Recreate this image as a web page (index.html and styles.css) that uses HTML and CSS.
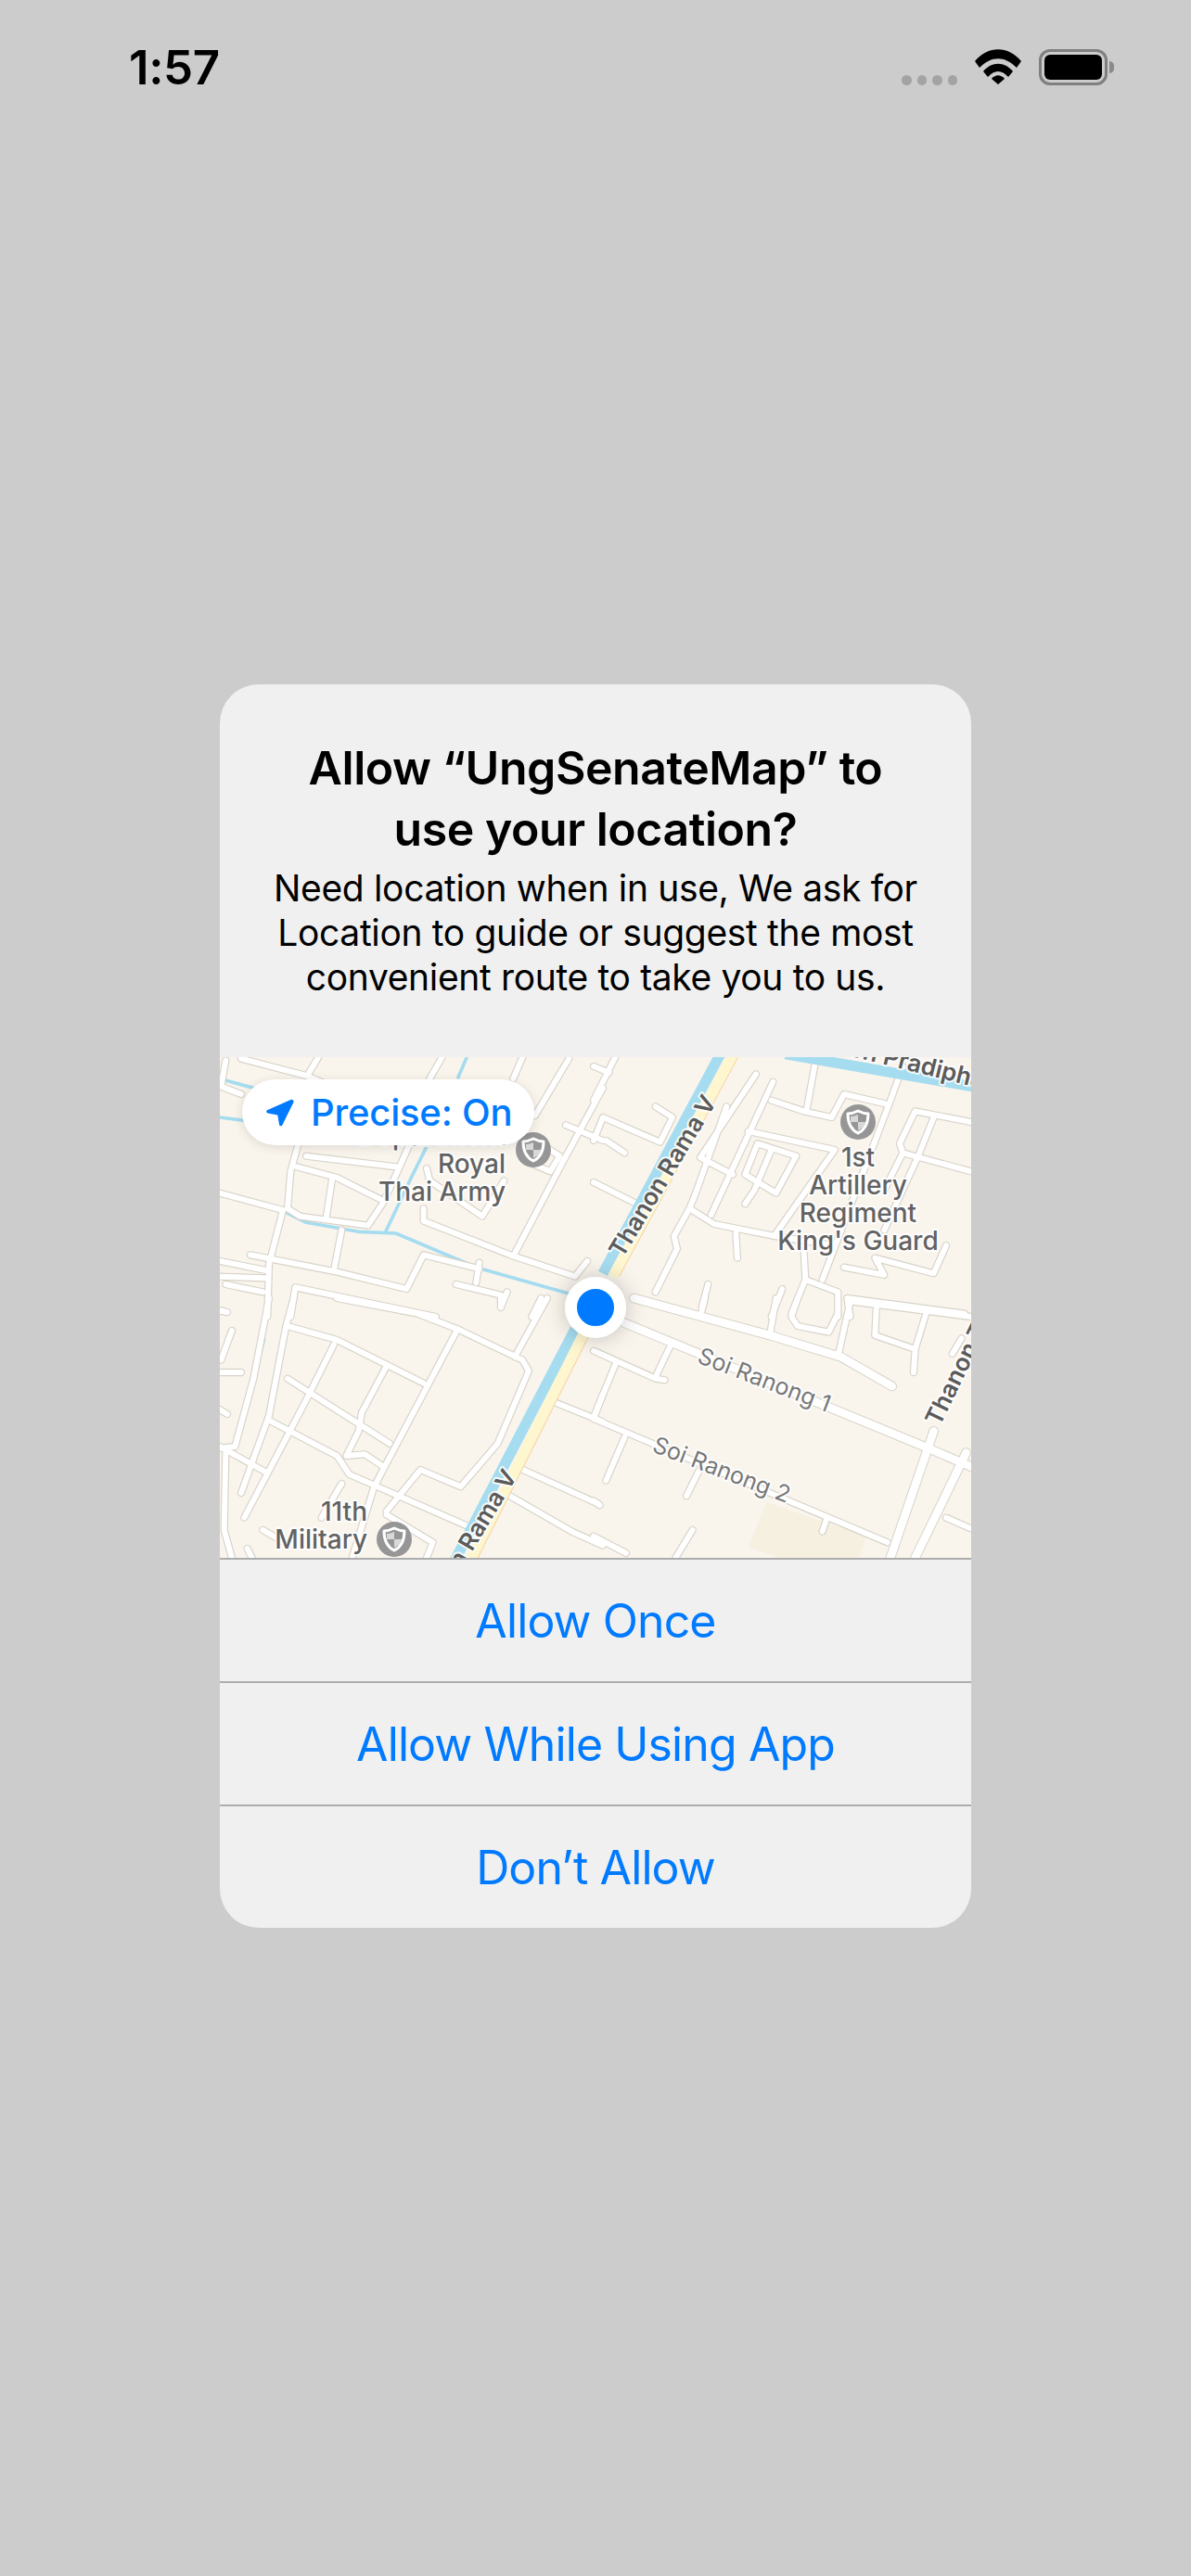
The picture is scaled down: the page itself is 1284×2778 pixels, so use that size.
FILE: index.html
```html
<!DOCTYPE html>
<html lang="en">
<head>
  <meta charset="UTF-8" />
  <meta name="viewport" content="width=device-width, initial-scale=1.0" />
  <title>Location permission</title>
  <link rel="stylesheet" href="styles.css">
</head>
<body>
  <div class="status-bar">
    <span class="clock">1:57</span>
    <div class="status-icons">
      <div class="signal"><i></i><i></i><i></i><i></i></div>
      <svg class="wifi" viewBox="0 0 50 38">
        <path d="M0 13C14-4 36-4 50 13L45 20C32 7 18 7 5 20Z"/>
        <path d="M9 24C18 13 32 13 41 24L36 30C29 22 21 22 14 30Z"/>
        <path d="M18 32C22 27 28 27 32 32L25 38Z"/>
      </svg>
      <div class="battery"><div class="battery-level"></div></div>
      <div class="battery-nub"></div>
    </div>
  </div>

  <div class="alert">
    <div class="alert-head">
      <h1>Allow “UngSenateMap” to<br>use your location?</h1>
      <p>Need location when in use, We ask for<br>Location to guide or suggest the most<br>convenient route to take you to us.</p>
    </div>

    <div class="map">
      <svg class="map-art" viewBox="0 0 810 540">
        <defs>
          <g id="poi">
            <circle r="19" class="poi-disc"/>
            <path d="M0-12C4-10 8-9 11-9C11 0 8 8 0 12C-8 8-11 0-11-9C-8-9-4-10 0-12Z" class="poi-shield"/>
            <path d="M0-8V0H8C8 3 6 6 0 9V0H-8C-8-3-8-5-8-6C-5-6-3-7 0-8Z" class="poi-check"/>
          </g>

          <g id="roads">
            <g transform="translate(-7 -10) scale(.3333)">
              <path d="M90 35L300 90L470 160M40 40L25 125L90 150M340 30L310 80M740 30L700 100M1000 30L970 100M1150 35L1040 220M1260 130L1130 370L975 665"/>
              <path d="M640 300L600 390L550 500L500 575L280 545L240 520L250 400L275 310M270 385L400 420L540 490M385 420L365 550M300 350L590 385"/>
              <path d="M680 520L680 560L960 670L1170 740L1210 690M690 390L700 430L870 545L940 430M1040 300L1120 350L1090 400L1020 370M1260 300L1140 250"/>
              <path d="M120 670L400 725L625 780L680 670L860 715M860 695L850 760M785 765L930 800L930 840M950 790L930 840"/>
              <path d="M21 470L225 525L180 700L175 870M415 590L390 720M21 690L170 720M21 740L165 745M40 765L160 790M250 870L265 775L720 870M1060 810L1030 870M21 850L40 855"/>
            </g>
            <g transform="translate(403 -10) scale(.3333)">
              <path d="M70 30L0 170M0 60L50 80M200 190L255 225L215 305L30 225L0 300M40 300L100 340M0 435L150 510"/>
              <path d="M525 85L345 355L450 410M580 110L380 540M430 190L330 470L310 520L260 610L270 650L200 790M310 520L390 570L590 610L780 640M460 600L465 680"/>
              <path d="M720 30L690 195M575 170L680 205L770 225L810 150L940 180M1000 60L960 170L740 750M500 270L780 330L590 600M530 310L490 410L590 470L655 350Z M575 330L520 460L490 505"/>
              <path d="M1220 240L1040 205L990 310L1000 340L940 460M1000 340L1220 400M1100 225L1050 350L940 590M1140 640L1100 730L910 680L940 735L810 710"/>
              <path d="M680 660L685 750L640 860M685 750L790 790L790 870M370 765L350 840M610 780L575 870M830 870L820 810L1200 860"/>
            </g>
            <g transform="translate(-7 260) scale(.3333)">
              <path d="M180 0L130 260L70 480L21 485M260 0L235 90L180 380L90 630M240 90L400 135L680 275M390 150L300 330L100 710"/>
              <path d="M560 220L480 370L470 430L430 510L490 505L550 545M790 100L520 610L440 870M240 260L570 470M180 395L400 510L440 570L840 745M21 480L165 560"/>
              <path d="M790 100L1000 200L1020 235L920 470L800 610L670 555L560 690M400 0L660 50L790 100M1080 0L975 190"/>
              <path d="M25 40L45 45M25 240L90 240M60 105L25 200M21 360L45 375M415 600L350 710M160 750L230 790M560 700L710 790L690 840M40 500L35 750L60 840M110 810L125 840"/>
              <path d="M990 550L1245 665M960 640L1160 755L1260 800M1100 335L1260 400M1260 310L1230 390"/>
            </g>
            <g transform="translate(403 260) scale(.3333)">
              <path d="M0 170L200 260L230 265M250 150L200 255M70 215L0 385M100 450L40 590M340 560L300 640M0 655L20 670M320 750L265 840M0 770L105 825M755 710L740 755"/>
              <path d="M660 0L640 60L660 90L760 110L790 50M590 0L570 120M360 0L350 40M830 10L790 190M915 20L910 120L1040 165M1075 50L1040 165L1035 240M830 10L1220 60M1190 130L1160 180M1140 710L1220 745"/>
              <path d="M0 390L950 790"/>
            </g>
          </g>

          <g id="wide-roads">
            <g transform="translate(403 260) scale(.3333)">
              <path d="M130 0L570 120L800 190L965 285M100 80L245 140L1070 480L1220 545M1100 430L960 840M1205 500L1040 840"/>
            </g>
          </g>
        </defs>

        <g transform="translate(403 260) scale(.3333)">
          <path class="lot" d="M560 660L880 770L860 840H600L500 805Z"/>
        </g>

        <g transform="translate(-7 -10) scale(.3333)" class="water">
          <path d="M21 100L130 130M21 225L100 235M40 30L25 90M820 30L790 100M270 320L255 400"/>
          <path d="M230 530L300 565L470 595L590 600L850 710L1150 795M555 600L640 420L690 320"/>
        </g>
        <g transform="translate(-7 260) scale(.3333)" class="water">
          <path d="M165 130L70 480"/>
        </g>

        <use href="#roads" class="casing"/>
        <use href="#wide-roads" class="casing-wide"/>
        <use href="#roads" class="road"/>
        <use href="#wide-roads" class="road-wide"/>

        <g transform="translate(403 -10) scale(.3333)">
          <path class="canal" d="M620 20L1225 125"/>
          <path class="canal" d="M410 20L30 730"/>
          <path class="avenue-edge" d="M472 20L82 740"/>
          <path class="avenue" d="M452 20L62 740"/>
        </g>
        <g transform="translate(-7 260) scale(.3333)">
          <path class="canal" d="M1170 100L780 850"/>
          <path class="avenue-edge" d="M1220 110L850 850"/>
          <path class="avenue" d="M1200 110L830 850"/>
        </g>

        <use href="#poi" x="338" y="100"/>
        <use href="#poi" x="688" y="70"/>
        <use href="#poi" x="188" y="520"/>

        <text class="place end" x="308" y="95">Department</text>
        <text class="place end" x="308" y="125">Royal</text>
        <text class="place end" x="308" y="155">Thai Army</text>
        <text class="place mid" x="688" y="118">1st</text>
        <text class="place mid" x="688" y="148">Artillery</text>
        <text class="place mid" x="688" y="178">Regiment</text>
        <text class="place mid" x="688" y="208">King's Guard</text>
        <text class="place end" x="159" y="500">11th</text>
        <text class="place end" x="159" y="530">Military</text>

        <text class="street mid" transform="translate(485 133) rotate(-59)">Thanon Rama V</text>
        <text class="street end" transform="translate(321 452) rotate(-59)">Thanon Rama V</text>
        <text class="street" transform="translate(776 399) rotate(-64)">Thanon Thai</text>
        <text class="street" transform="translate(677 -2) rotate(14)">en Pradiphat</text>
        <text class="lane mid" transform="translate(584 356) rotate(21)">Soi Ranong 1</text>
        <text class="lane mid" transform="translate(538 453) rotate(21)">Soi Ranong 2</text>
      </svg>

      <div class="pill">
        <svg class="pill-arrow" viewBox="0 0 30 30"><path d="M29 1.5C29.8 2.2 29.6 3.4 29.2 4.3L17.5 28C16.6 29.8 14.4 29.6 14 27.7L12.3 17.6L1.8 15.4C-.2 15-.4 12.8 1.5 12L26.4 1C27.4.6 28.4.8 29 1.5Z"/></svg>
        <span>Precise: On</span>
      </div>
      <div class="pin"></div>
    </div>

    <div class="alert-btn">Allow Once</div>
    <div class="alert-btn">Allow While Using App</div>
    <div class="alert-btn">Don’t Allow</div>
  </div>
</body>
</html>
```

FILE: styles.css
```css
* {
  margin: 0;
  padding: 0;
  box-sizing: border-box;
}

body {
  width: 1284px;
  height: 2778px;
  overflow: hidden;
  background: #cccccc;
  font-family: Inter, 'Noto Sans', sans-serif;
  color: #000;
}

.status-bar {
  height: 132px;
  padding: 47px 83px 0 139px;
  display: flex;
  justify-content: space-between;
  align-items: flex-start;
}

.clock {
  font-size: 51px;
  line-height: 52px;
  font-weight: 600;
  letter-spacing: -.4px;
}

.status-icons {
  display: flex;
  align-items: flex-start;
  padding-top: 6px;
}

.signal {
  display: flex;
  gap: 6px;
  margin-top: 28px;
}

.signal i {
  width: 10.5px;
  height: 10.5px;
  border-radius: 50%;
  background: #a3a3a3;
}

.wifi {
  width: 50px;
  height: 38px;
  margin-left: 19px;
  fill: #000;
}

.battery {
  width: 74px;
  height: 39px;
  margin-left: 19px;
  padding: 3px;
  border: 3px solid #7f7f7f;
  border-radius: 12px;
}

.battery-level {
  width: 100%;
  height: 100%;
  background: #000;
  border-radius: 6px;
}

.battery-nub {
  width: 5px;
  height: 13px;
  margin: 13px 0 0 2px;
  background: #8a8a8a;
  border-radius: 0 5px 5px 0;
}

.alert {
  width: 810px;
  margin: 606px auto 0;
  background: #f0f0f0;
  border-radius: 42px;
  overflow: hidden;
}

.alert-head {
  height: 402px;
  padding-top: 57px;
  text-align: center;
}

.alert-head h1 {
  font-size: 50px;
  line-height: 66px;
  font-weight: 600;
  letter-spacing: -.45px;
}

.alert-head p {
  font-size: 39px;
  line-height: 48px;
  letter-spacing: -.35px;
  margin-top: 7px;
}

.map {
  position: relative;
  height: 540px;
  overflow: hidden;
  background: #f9f5ed;
}

.map-art {
  display: block;
  width: 810px;
  height: 540px;
  fill: none;
  stroke-linecap: round;
  stroke-linejoin: round;
}

.lot { fill: #f6f0e1; }

.water path { stroke: #a6dcef; stroke-width: 11; stroke-linecap: butt; }

.casing { stroke: #d8d3c8; stroke-width: 25; }
.road { stroke: #fff; stroke-width: 18; }
.casing-wide { stroke: #d8d3c8; stroke-width: 32; }
.road-wide { stroke: #fff; stroke-width: 26; }

.canal { stroke: #a6dcef; stroke-width: 34; stroke-linecap: butt; }
.avenue { stroke: #fdf6cf; stroke-width: 34; stroke-linecap: butt; }
.avenue-edge { stroke: #f8cf9a; stroke-width: 4; stroke-linecap: butt; }

.poi-disc { fill: #969696; }
.poi-shield { fill: #969696; stroke: #fff; stroke-width: 3; }
.poi-check { fill: #d8d8d8; }

.map-art text {
  paint-order: stroke;
  stroke: rgba(255, 255, 255, .85);
  stroke-width: 4px;
  stroke-linejoin: round;
}

.map-art .mid { text-anchor: middle; }
.map-art .end { text-anchor: end; }

.place {
  font-size: 28px;
  font-weight: 500;
  fill: #626262;
}

.street {
  font-size: 26px;
  font-weight: 600;
  fill: #5b5b5b;
}

.lane {
  font-size: 25px;
  font-weight: 400;
  fill: #777;
}

.pill {
  position: absolute;
  left: 24px;
  top: 24px;
  width: 315px;
  height: 71px;
  padding-left: 26px;
  display: flex;
  align-items: center;
  gap: 18px;
  background: #fff;
  border-radius: 36px;
  box-shadow: 0 2px 12px rgba(0, 0, 0, .12);
  color: #007aff;
  font-size: 40px;
  font-weight: 500;
  letter-spacing: -.2px;
}

.pill-arrow {
  width: 30px;
  height: 30px;
  fill: #007aff;
}

.pin {
  position: absolute;
  left: 372px;
  top: 237px;
  width: 66px;
  height: 66px;
  border: 13px solid #fff;
  border-radius: 50%;
  background: #007aff;
  box-shadow: 0 0 24px rgba(0, 0, 0, .22);
}

.alert-btn {
  height: 133px;
  display: flex;
  align-items: center;
  justify-content: center;
  border-top: 2px solid #adadad;
  color: #007aff;
  font-size: 50px;
  letter-spacing: -.9px;
}
```
